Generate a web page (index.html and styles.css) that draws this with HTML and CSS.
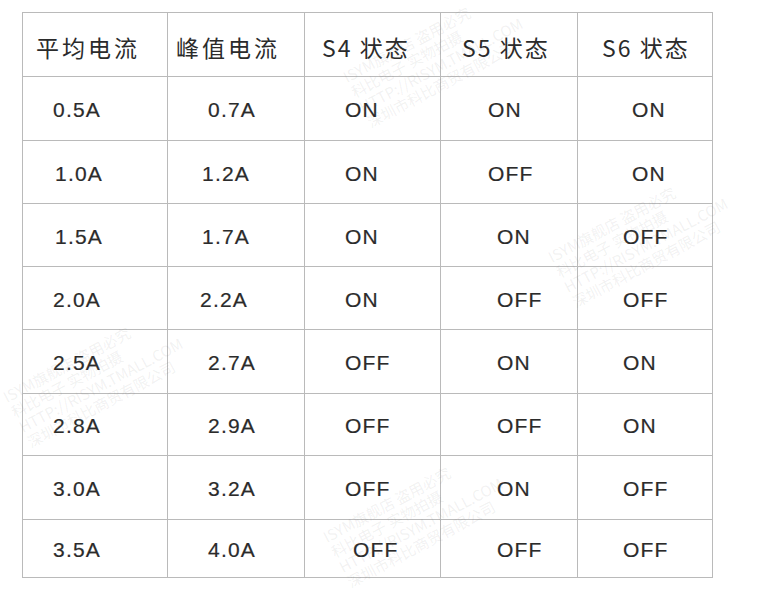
FILE: index.html
```html
<!DOCTYPE html>
<html lang="zh">
<head>
<meta charset="utf-8">
<title>电流与开关状态</title>
<link rel="stylesheet" href="styles.css">
</head>
<body>
<div class="page">
  <table class="spec">
    <colgroup>
      <col class="w1"><col class="w2"><col class="w3"><col class="w4"><col class="w5">
    </colgroup>
    <tr class="head">
      <th class="p14">平均电流</th><th class="p8">峰值电流</th><th class="p18 sw">S4 状态</th><th class="p22 sw">S5 状态</th><th class="p25 sw">S6 状态</th>
    </tr>
    <tr class="h64">
      <td class="p30">0.5A</td><td class="p40">0.7A</td><td class="p40">ON</td><td class="p47">ON</td><td class="p54">ON</td>
    </tr>
    <tr class="h63">
      <td class="p32">1.0A</td><td class="p34">1.2A</td><td class="p40">ON</td><td class="p47">OFF</td><td class="p54">ON</td>
    </tr>
    <tr class="h63">
      <td class="p32">1.5A</td><td class="p34">1.7A</td><td class="p40">ON</td><td class="p56">ON</td><td class="p45">OFF</td>
    </tr>
    <tr class="h63">
      <td class="p30">2.0A</td><td class="p32">2.2A</td><td class="p40">ON</td><td class="p56">OFF</td><td class="p45">OFF</td>
    </tr>
    <tr class="h64">
      <td class="p30">2.5A</td><td class="p40">2.7A</td><td class="p40">OFF</td><td class="p56">ON</td><td class="p45">ON</td>
    </tr>
    <tr class="h62">
      <td class="p30">2.8A</td><td class="p40">2.9A</td><td class="p40">OFF</td><td class="p56">OFF</td><td class="p45">ON</td>
    </tr>
    <tr class="h64">
      <td class="p30">3.0A</td><td class="p40">3.2A</td><td class="p40">OFF</td><td class="p56">ON</td><td class="p45">OFF</td>
    </tr>
    <tr class="h58">
      <td class="p30">3.5A</td><td class="p40">4.0A</td><td class="p48">OFF</td><td class="p56">OFF</td><td class="p45">OFF</td>
    </tr>
  </table>

  <div class="wm wm-a">ISYM旗舰店 盗用必究<br>科比电子 实物拍摄<br>HTTP://RISYM.TMALL.COM<br>深圳市科比商贸有限公司</div>
  <div class="wm wm-b">ISYM旗舰店 盗用必究<br>科比电子 实物拍摄<br>HTTP://RISYM.TMALL.COM<br>深圳市科比商贸有限公司</div>
  <div class="wm wm-c">ISYM旗舰店 盗用必究<br>科比电子 实物拍摄<br>HTTP://RISYM.TMALL.COM<br>深圳市科比商贸有限公司</div>
  <div class="wm wm-d">ISYM旗舰店 盗用必究<br>科比电子 实物拍摄<br>HTTP://RISYM.TMALL.COM<br>深圳市科比商贸有限公司</div>
</div>
</body>
</html>
```

FILE: styles.css
```css
html, body {
  margin: 0;
  padding: 0;
  background: #ffffff;
}

.page {
  position: relative;
  width: 757px;
  height: 592px;
  overflow: hidden;
  padding: 12px 0 0 22px;
  box-sizing: border-box;
  font-family: "Liberation Sans", "Noto Sans CJK SC", sans-serif;
  color: #2b2b2b;
}

.spec {
  border-collapse: collapse;
  table-layout: fixed;
  width: 690px;
}

.w1 { width: 145px; }
.w2 { width: 137px; }
.w3 { width: 136px; }
.w4 { width: 137px; }
.w5 { width: 135px; }

.spec th,
.spec td {
  border: 1px solid #bababa;
  text-align: left;
  vertical-align: middle;
  padding: 0;
  white-space: nowrap;
}

.spec th {
  font-family: "Noto Sans CJK SC", "Liberation Sans", sans-serif;
  font-weight: 400;
  font-size: 23px;
  letter-spacing: 3px;
  padding-top: 4px;
}

.spec th.sw {
  letter-spacing: 2px;
}

.spec td {
  font-size: 21px;
  letter-spacing: 1.2px;
  padding-top: 3px;
  -webkit-text-stroke: 0.2px #2b2b2b;
}

.head { height: 64px; }
.h64 { height: 64px; }
.h63 { height: 63px; }
.h62 { height: 62px; }
.h58 { height: 58px; }

.spec .p8 { padding-left: 8px; }
.spec .p14 { padding-left: 13px; }
.spec .p18 { padding-left: 17px; }
.spec .p22 { padding-left: 21px; }
.spec .p25 { padding-left: 24px; }
.spec .p30 { padding-left: 30px; }
.spec .p32 { padding-left: 32px; }
.spec .p34 { padding-left: 34px; }
.spec .p40 { padding-left: 40px; }
.spec .p45 { padding-left: 45px; }
.spec .p47 { padding-left: 47px; }
.spec .p48 { padding-left: 48px; }
.spec .p54 { padding-left: 54px; }
.spec .p56 { padding-left: 56px; }

.wm {
  position: absolute;
  font-family: "Noto Sans CJK SC", "Liberation Sans", sans-serif;
  font-size: 15px;
  line-height: 17px;
  color: rgba(120, 120, 120, 0.1);
  transform: rotate(-28deg);
  transform-origin: left top;
  white-space: nowrap;
  pointer-events: none;
}

.wm-a { left: 340px; top: 70px; }
.wm-b { left: 545px; top: 250px; }
.wm-c { left: 0px; top: 390px; }
.wm-d { left: 320px; top: 530px; }
```
